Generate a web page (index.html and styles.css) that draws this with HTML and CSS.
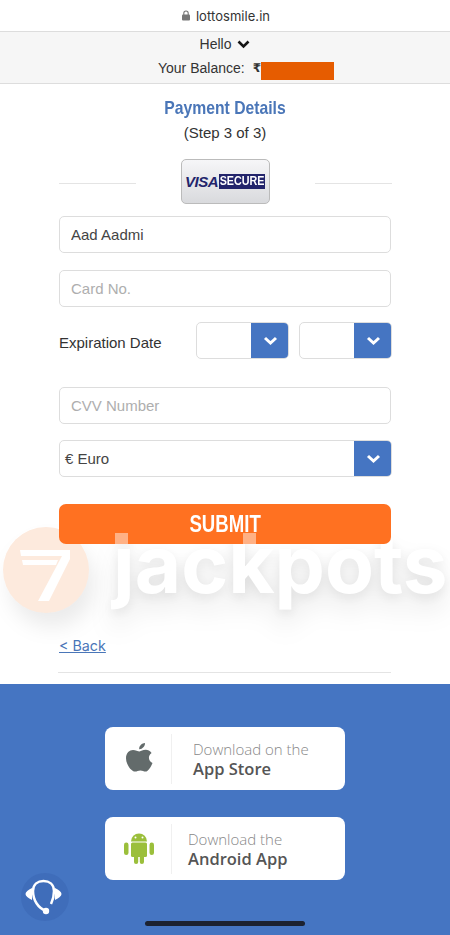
FILE: index.html

```html
<!DOCTYPE html>
<html lang="en">
<head>
    <meta charset="UTF-8">
    <meta name="viewport" content="width=device-width, initial-scale=1.0">
    <title>Payment Details</title>
    <link rel="stylesheet" href="styles.css">
</head>
<body>
    <div class="address-bar">
        <svg class="lock" width="8" height="11" viewBox="0 0 8 11"><path d="M1.8 5V3.2a2.2 2.2 0 0 1 4.4 0V5" fill="none" stroke="#777" stroke-width="1.1"/><rect y="4.6" width="8" height="6" rx="1" fill="#777"/></svg>
        <span>lottosmile.in</span>
    </div>
    <header class="account">
        <div class="hello">Hello
            <svg width="13" height="9" viewBox="0 0 13 9"><path d="M1.5 1.5l5 5 5-5" fill="none" stroke="#151515" stroke-width="2.6"/></svg>
        </div>
        <div class="balance">Your Balance: <span class="rupee">₹</span><span class="redacted"></span></div>
    </header>

    <main class="payment">
        <h1>Payment Details</h1>
        <p class="step">(Step 3 of 3)</p>
        <div class="badge-row">
            <span class="rule"></span>
            <div class="visa-badge"><span class="visa">VISA</span><span class="secure"><span class="secure-text">SECURE</span></span></div>
            <span class="rule"></span>
        </div>

        <form class="card-form">
            <input class="field name-field" type="text" value="Aad Aadmi">
            <input class="field card-field" type="text" placeholder="Card No.">
            <div class="expiry">
                <label>Expiration Date</label>
                <div class="pick pick-month">
                    <span class="pick-value"></span>
                    <span class="pick-btn"><svg width="15" height="10" viewBox="0 0 15 10"><path d="M2 2l5.500 5L13 2" fill="none" stroke="#fff" stroke-width="3"/></svg></span>
                </div>
                <div class="pick pick-year">
                    <span class="pick-value"></span>
                    <span class="pick-btn"><svg width="15" height="10" viewBox="0 0 15 10"><path d="M2 2l5.500 5L13 2" fill="none" stroke="#fff" stroke-width="3"/></svg></span>
                </div>
            </div>
            <input class="field cvv-field" type="text" placeholder="CVV Number">
            <div class="pick pick-currency">
                <span class="pick-value">€ Euro</span>
                <span class="pick-btn"><svg width="15" height="10" viewBox="0 0 15 10"><path d="M2 2l5.500 5L13 2" fill="none" stroke="#fff" stroke-width="3"/></svg></span>
            </div>
            <button class="submit" type="button"><span class="submit-text">SUBMIT</span></button>
        </form>

        <div class="watermark">
            <svg class="wm-logo" width="90" height="90" viewBox="0 0 90 90"><circle cx="44" cy="44" r="43" fill="#fdeadd"/><g fill="#fff"><path d="M18 24h50v6H19z"/><path d="M20 34h36l-2 5H21z"/><path d="M60 30h8v3L47 75H36z"/></g></svg>
            <span class="wm-text">jackpots</span>
        </div>

        <a class="back" href="#">&lt; Back</a>
        <hr class="divider">
    </main>

    <footer class="apps">
        <a class="app-btn" href="#">
            <span class="app-icon">
                <svg width="28" height="34" viewBox="0 0 28 34"><path d="M20 1c.2 3.400-2.600 6.400-5.800 6.200C13.900 4 16.900 1.200 20 1zM14.500 9.400c1.500 0 3.500-1.700 6.400-1.600 1.800.1 4.200.9 5.700 3.100-3.900 2.500-3.500 8 .9 10-1.200 3.400-4.200 8.700-7 8.700-1.900 0-2.900-1.200-5.100-1.200s-3.500 1.200-5.200 1.200C6.200 29.700 1 22.300 1 16.200 1 10.800 4.500 8 8 8c2.600 0 4.900 1.400 6.500 1.400z" fill="#636b6b"/></svg>
            </span>
            <span class="app-label label-apple"><span class="line-top">Download on the</span><span class="line-bottom">App Store</span></span>
        </a>
        <a class="app-btn" href="#">
            <span class="app-icon icon-android">
                <svg width="30" height="33" viewBox="0 0 30 33"><g fill="#9bbf3b"><path d="M7 10.500a8 8 0 0 1 16 0z"/><rect x="7" y="11.500" width="16" height="14.500" rx="1.500"/><rect x="0" y="11.500" width="4.500" height="12.500" rx="2.200"/><rect x="25.500" y="11.500" width="4.500" height="12.500" rx="2.200"/><rect x="10" y="22" width="4.200" height="11" rx="2.100"/><rect x="15.800" y="22" width="4.200" height="11" rx="2.100"/></g><circle cx="11.500" cy="6.500" r="1" fill="#fff"/><circle cx="18.500" cy="6.500" r="1" fill="#fff"/></svg>
            </span>
            <span class="app-label label-android"><span class="line-top">Download the</span><span class="line-bottom">Android App</span></span>
        </a>
    </footer>

    <div class="help">
        <svg width="40" height="40" viewBox="0 0 40 40"><path d="M21 34C13 31 8 23 8 14 8 7 13 4 18.500 4 24 4 29 7 29 14c0 5-1 9-3 13" fill="none" stroke="#fff" stroke-width="2.500"/><path d="M7 11v12c-4-2-6.500-4-6.500-6S3 13 7 11zM30 11v12c4-2 6.500-4 6.500-6S34 13 30 11z" fill="#fff"/><circle cx="21" cy="34" r="3.200" fill="#fff"/></svg>
    </div>
    <div class="home-bar"></div>
</body>
</html>
```

FILE: styles.css

```css
html, body {
    margin: 0;
    padding: 0;
}
body {
    position: relative;
    width: 450px;
    height: 935px;
    overflow: hidden;
    background: #fff;
    font-family: "Liberation Sans", Arial, sans-serif;
    color: #333;
}
.address-bar {
    height: 31px;
    display: flex;
    justify-content: center;
    align-items: center;
    gap: 6px;
    padding-left: 2px;
    font-size: 13px;
    letter-spacing: 0.05px;
    color: #333;
    font-family: Inter, "Liberation Sans", sans-serif;
}
.account {
    height: 51px;
    background: #f6f6f6;
    border-top: 1px solid #ddd;
    border-bottom: 1px solid #ddd;
    text-align: center;
    font-size: 14px;
}
.hello {
    height: 25px;
    padding-top: 1px;
    box-sizing: border-box;
    line-height: 23px;
}
.hello svg {
    margin-left: 2px;
}
.balance {
    display: flex;
    justify-content: center;
    align-items: flex-start;
    margin-left: 42px;
    line-height: 22px;
    height: 26px;
}
.rupee {
    margin-left: 8px;
    font-weight: bold;
    font-family: "DejaVu Sans", sans-serif;
    font-size: 12px;
}
.redacted {
    width: 73px;
    height: 18px;
    margin-top: 5px;
    background: #e65c00;
}
.payment {
    position: relative;
    height: 600px;
}
h1 {
    margin: 0;
    padding-top: 11px;
    height: 25px;
    line-height: 25px;
    text-align: center;
    font-size: 18.5px;
    font-weight: bold;
    color: #4a76b8;
    transform: scaleX(0.85);
}
.step {
    margin: 0;
    padding-top: 3px;
    text-align: center;
    font-size: 15px;
    line-height: 20px;
}
.badge-row {
    display: flex;
    justify-content: center;
    align-items: center;
    gap: 45px;
    margin-top: 16px;
}
.rule {
    width: 77px;
    height: 1px;
    margin-top: 3px;
    background: #e4e4e4;
}
.visa-badge {
    box-sizing: border-box;
    width: 89px;
    height: 45px;
    display: flex;
    align-items: center;
    justify-content: center;
    gap: 1px;
    border: 1px solid #bbb;
    border-radius: 5px;
    background: linear-gradient(#f6f6f8, #d9dadd);
}
.visa {
    color: #22246b;
    font-size: 15px;
    font-weight: bold;
    font-style: italic;
    letter-spacing: -0.5px;
}
.secure {
    width: 46px;
    height: 15px;
    display: flex;
    justify-content: center;
    background: #22246b;
}
.secure-text {
    color: #fff;
    font-size: 12.5px;
    font-weight: bold;
    line-height: 15px;
    transform: scaleX(0.86);
}
.card-form {
    width: 333px;
    margin: 12px 0 0 59px;
}
.field {
    display: block;
    box-sizing: border-box;
    width: 332px;
    height: 37px;
    padding: 0 11px;
    border: 1px solid #ddd;
    border-radius: 5px;
    background: #fff;
    font-family: "Liberation Sans", Arial, sans-serif;
    font-size: 15px;
    color: #444;
}
.field::placeholder {
    color: #aeaeae;
    opacity: 1;
}
.card-field {
    margin-top: 17px;
}
.expiry {
    display: flex;
    align-items: center;
    margin-top: 15px;
    height: 37px;
    font-size: 15px;
}
.expiry label {
    width: 137px;
    margin-top: 4px;
}
.pick {
    display: flex;
    box-sizing: border-box;
    height: 37px;
    border: 1px solid #ddd;
    border-radius: 5px;
    overflow: hidden;
    background: #fff;
}
.pick-month {
    width: 93px;
}
.pick-year {
    width: 93px;
    margin-left: 10px;
}
.pick-value {
    flex: 1;
    padding-left: 5px;
    line-height: 35px;
    font-size: 15px;
    color: #444;
}
.pick-btn {
    width: 38px;
    margin: -1px -1px -1px 0;
    display: flex;
    align-items: center;
    justify-content: center;
    background: #4575c2;
}
.cvv-field {
    margin-top: 28px;
}
.pick-currency {
    width: 333px;
    margin-top: 16px;
}
.submit {
    display: block;
    position: relative;
    z-index: 1;
    width: 332px;
    height: 40px;
    margin-top: 27px;
    padding: 0;
    border: 0;
    border-radius: 7px;
    background: #ff7121;
    color: #fff;
    font-family: "Liberation Sans", Arial, sans-serif;
    font-size: 23px;
    font-weight: bold;
}
.submit-text {
    display: inline-block;
    transform: scaleX(0.81);
}
/* tops of the watermark letters showing through the button */
.submit::before,
.submit::after {
    content: "";
    position: absolute;
    top: 29px;
    width: 13px;
    height: 11px;
    background: rgba(255, 255, 255, 0.45);
}
.submit::before {
    left: 56px;
}
.submit::after {
    left: 184px;
}
.watermark {
    display: flex;
    height: 90px;
    margin: -18px 0 0 2px;
}
.wm-logo {
    flex: none;
    filter: drop-shadow(6px 14px 10px rgba(0, 0, 0, 0.08));
}
.wm-text {
    margin: -7px 0 0 21px;
    font-family: Inter, "Liberation Sans", sans-serif;
    font-size: 80px;
    line-height: 90px;
    font-weight: 700;
    color: #fff;
    white-space: nowrap;
    filter: drop-shadow(0 4px 6px rgba(0, 0, 0, 0.08)) drop-shadow(0 16px 12px rgba(0, 0, 0, 0.09));
}
.back {
    display: block;
    margin: 21px 0 0 59px;
    font-size: 14.3px;
    line-height: 18px;
    color: #4a76b8;
    font-family: Inter, "Liberation Sans", sans-serif;
}
.divider {
    width: 333px;
    margin: 17px 0 0 58px;
    border: 0;
    border-top: 1px solid #e4e4e4;
}
.apps {
    position: absolute;
    left: 0;
    right: 0;
    top: 684px;
    height: 251px;
    box-sizing: border-box;
    padding-top: 43px;
    background: #4575c2;
    display: flex;
    flex-direction: column;
    align-items: center;
    gap: 27px;
}
.app-btn {
    box-sizing: border-box;
    width: 240px;
    height: 63px;
    display: flex;
    align-items: center;
    background: #fff;
    border-radius: 8px;
    text-decoration: none;
    color: #555;
    font-family: "Open Sans", sans-serif;
}
.app-icon {
    width: 67px;
    height: 50px;
    flex: none;
    display: flex;
    align-items: center;
    justify-content: center;
    box-sizing: border-box;
    padding-left: 2px;
    border-right: 1px solid #f0f0f0;
}
.icon-android svg {
    margin-top: -3px;
}
.app-label {
    display: flex;
    flex-direction: column;
}
.label-apple {
    margin-left: 21px;
}
.label-android {
    margin-left: 16px;
}
.line-top {
    font-size: 15px;
    font-weight: 300;
    line-height: 20px;
    color: #888;
}
.line-bottom {
    font-size: 16.5px;
    font-weight: 600;
    line-height: 20px;
    color: #555;
}
.help {
    position: absolute;
    left: 21px;
    top: 873px;
    width: 48px;
    height: 48px;
    border-radius: 50%;
    background: #3f6dba;
    display: flex;
    align-items: center;
    justify-content: center;
}
.home-bar {
    position: absolute;
    left: 145px;
    top: 921px;
    width: 160px;
    height: 5px;
    border-radius: 3px;
    background: #1c2230;
}
```
